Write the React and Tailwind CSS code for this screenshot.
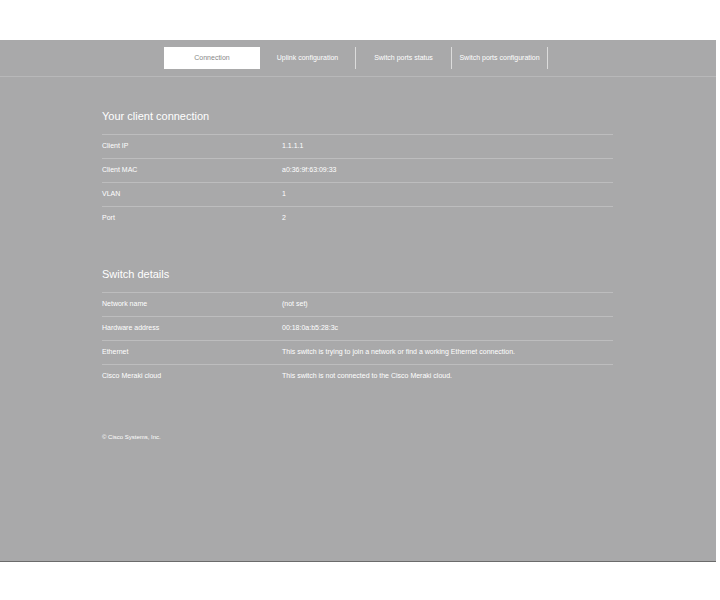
export default function App() {
  const client = [
    ['Client IP', '1.1.1.1'],
    ['Client MAC', 'a0:36:9f:63:09:33'],
    ['VLAN', '1'],
    ['Port', '2'],
  ];
  const details = [
    ['Network name', '(not set)'],
    ['Hardware address', '00:18:0a:b5:28:3c'],
    ['Ethernet', 'This switch is trying to join a network or find a working Ethernet connection.'],
    ['Cisco Meraki cloud', 'This switch is not connected to the Cisco Meraki cloud.'],
  ];
  const tabs = ['Connection', 'Uplink configuration', 'Switch ports status', 'Switch ports configuration'];

  const Section = ({ title, rows }) => (
    <div>
      <h2 className="text-[11px] text-white h-[18px] leading-[18px] mb-[9px]">{title}</h2>
      {rows.map(([k, v]) => (
        <div key={k} className="flex h-6 items-center border-t border-[#bdbdbe] text-[7px] text-white">
          <div className="w-[180px]">{k}</div>
          <div>{v}</div>
        </div>
      ))}
    </div>
  );

  return (
    <div className="w-[720px] h-[600px] bg-white pt-10" style={{ fontFamily: '"Liberation Sans", Arial, sans-serif' }}>
      <div className="w-[716px] h-[522px] bg-[#a9a9aa] border-b border-[#6b6b6b] flex flex-col">
        <div className="h-[37px] border-b border-[#b8b8b9] flex justify-center pt-[7px] pr-[4px]">
          {tabs.map((t, i) => (
            <div
              key={t}
              className={
                'w-[96px] h-[22px] flex items-center justify-center text-[7px] ' +
                (i === 0 ? 'bg-white text-[#888]' : 'text-white border-r border-[#dcdcdc]')
              }
            >
              {t}
            </div>
          ))}
        </div>
        <div className="pl-[102px] w-[613px] pt-[30px]">
          <Section title="Your client connection" rows={client} />
          <div className="h-[35px]" />
          <Section title="Switch details" rows={details} />
          <p className="text-[6px] text-white mt-[45px]">© Cisco Systems, Inc.</p>
        </div>
      </div>
    </div>
  );
}
